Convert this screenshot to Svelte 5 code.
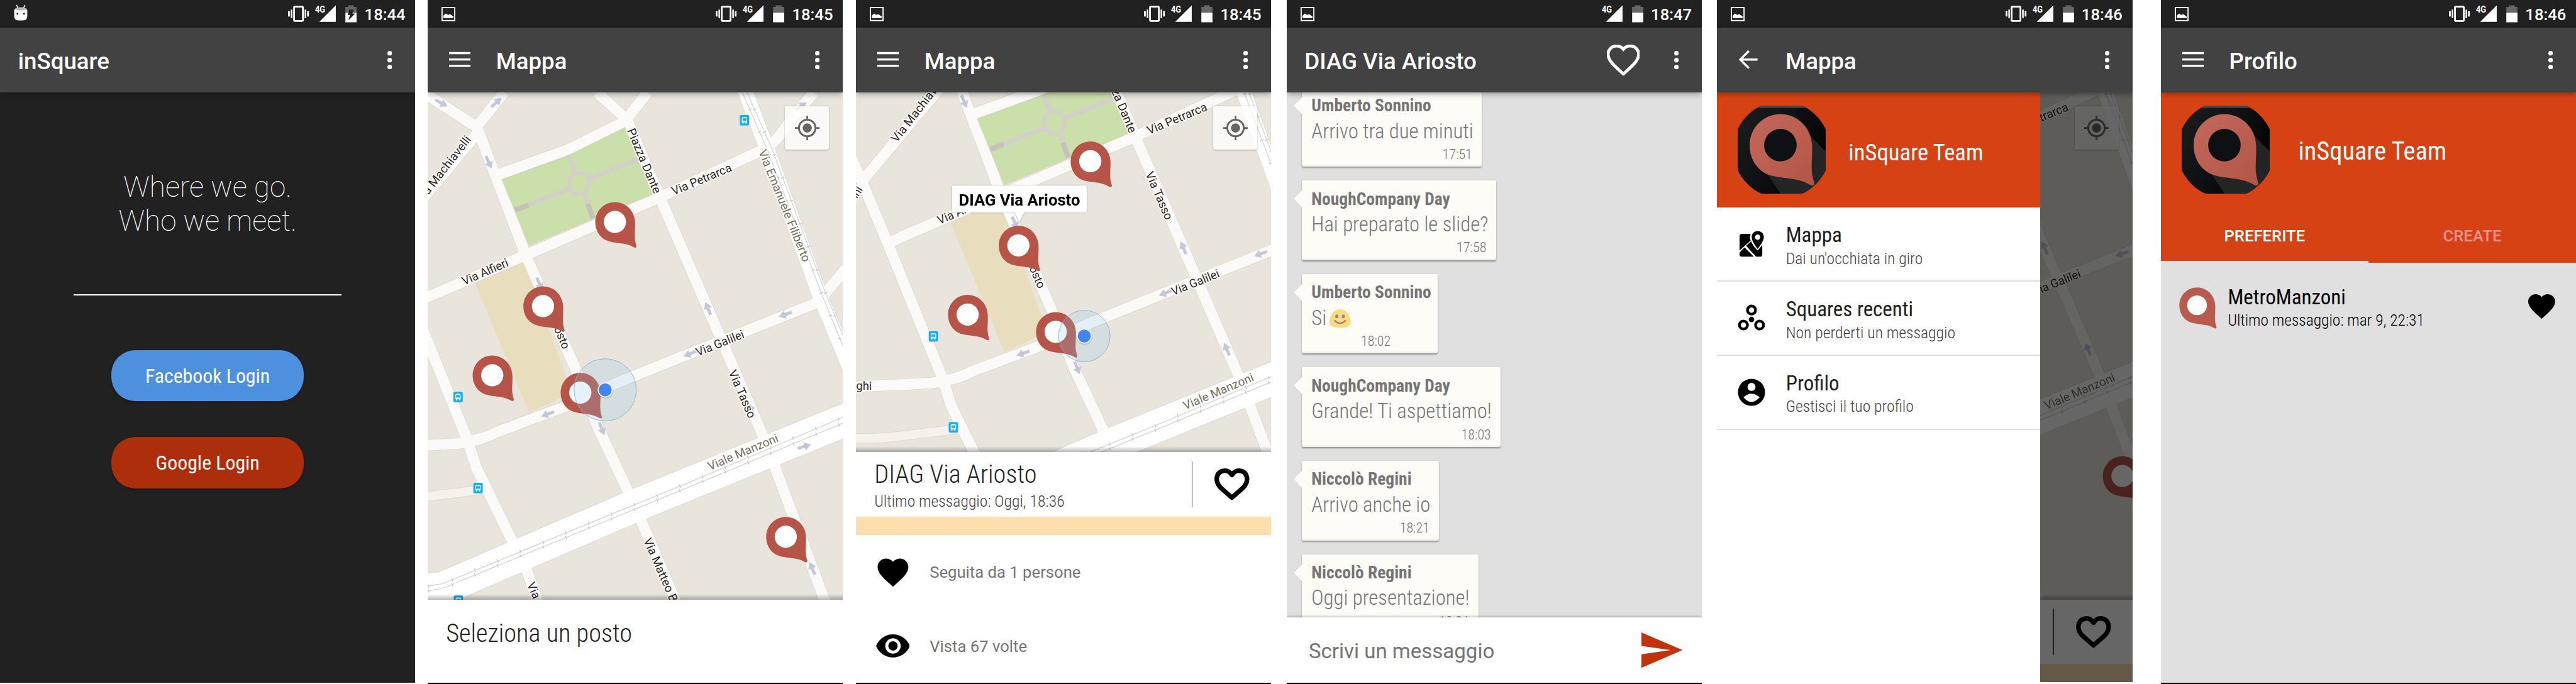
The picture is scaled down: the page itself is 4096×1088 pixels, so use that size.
<script>
  const PIN =
    'M0,-242C135,-242 240,-135 247,0C250,60 242,130 244,190C246,235 255,265 264,295C266,312 254,317 242,314C225,308 195,285 138,273C60,255 0,256 -60,240C-170,215 -240,120 -240,0C-240,-133 -133,-242 0,-242Z';
  const HEART =
    'M12 21.35l-1.45-1.32C5.4 15.36 2 12.28 2 8.5 2 5.42 4.42 3 7.5 3c1.74 0 3.41.81 4.5 2.09C13.09 3.81 14.76 3 16.5 3 19.58 3 22 5.42 22 8.5c0 3.78-3.4 6.86-8.55 11.54L12 21.35z';

  const messages = [
    { from: 'Umberto Sonnino', text: 'Arrivo tra due minuti', time: '17:51', w: 468 },
    { from: 'NoughCompany Day', text: 'Hai preparato le slide?', time: '17:58', w: 505 },
    { from: 'Umberto Sonnino', text: 'Si', emoji: true, time: '18:02', w: 353 },
    { from: 'NoughCompany Day', text: 'Grande! Ti aspettiamo!', time: '18:03', w: 517 },
    { from: 'Niccolò Regini', text: 'Arrivo anche io', time: '18:21', w: 357 },
    { from: 'Niccolò Regini', text: 'Oggi presentazione!', time: '18:24', w: 459 }
  ];

  const menu = [
    { icon: 'map', title: 'Mappa', sub: "Dai un'occhiata in giro" },
    { icon: 'squares', title: 'Squares recenti', sub: 'Non perderti un messaggio' },
    { icon: 'user', title: 'Profilo', sub: 'Gestisci il tuo profilo' }
  ];

  const roads = [
    'M-130,165L0,247L127,330L199,240',
    'M130,335L253,658L389,970L443,1112L522,1280L556,1356L643,1559L715,1720',
    'M130,345L-103,625',
    'M-140,555L-100,646L-36,800L101,1138L126,1215L220,1407L259,1487L285,1560L330,1660',
    'M-36,790L0,772L253,664L597,516L866,392Q900,378 937,323L1004,240',
    'M183,454L367,388L512,316L572,240',
    'M441,240L519,312L603,511L760,874L870,1129L901,1209L1032,1560L1095,1720',
    'M-140,1164L0,1158L75,1154Q144,1144 179,1124L377,1050L484,999L767,885L1015,786L1095,690'
  ];

  const arrows = [
    [36, 268, 28], [179, 266, -42], [159, 422, 66], [291, 738, 66], [312, 1077, 160],
    [453, 1115, 68], [682, 920, 158], [930, 818, 160], [729, 802, -113],
    [1000, 1478, -113], [980, 1161, -18], [971, 276, -35], [842, 1066, -113]
  ];

  const pins = [[487, 577], [300, 796], [168, 976], [397, 1021], [931.5, 1396]];
  const buses = [[824, 312], [79, 1032], [131, 1269], [80, 1562]];

  const commonLabels = [
    { t: 'Via Machiavelli', x: -16, y: 530, r: -52, l: 212 },
    { t: 'Via Petrarca', x: 640, y: 508, r: -22.8, l: 166 },
    { t: 'Via Galilei', x: 703, y: 927, r: -22, l: 132 },
    { t: 'Via Alfieri', x: 95, y: 742, r: -23.5, l: 128 },
    { t: 'Via Ariosto', x: 293, y: 772, r: 67, l: 150 },
    { t: 'Viale Manzoni', x: 734, y: 1224, r: -23, l: 196, soft: true }
  ];
  const homeLabels = [
    ...commonLabels,
    { t: 'Piazza Dante', x: 518, y: 339, r: 67, l: 181 },
    { t: 'Via Emanuele Filiberto', x: 860, y: 394, r: 68, l: 312, soft: true },
    { t: 'Via Tasso', x: 782, y: 968, r: 66.5, l: 133 },
    { t: 'Via Matteo B', x: 561, y: 1405, r: 66.5, l: 178 },
    { t: 'Via', x: 258, y: 1520, r: 66.5, l: 43 }
  ];
  const placeLabels = [
    ...commonLabels,
    { t: 'Piazza Dante', x: 518, y: 339, r: 67, l: 181 },
    { t: 'Via Tasso', x: 630, y: 610, r: 66.5, l: 133 },
    { t: 'nni', x: -124, y: 683, r: -58, l: 38 },
    { t: 'ghi', x: -122, y: 1172, r: 0, l: 41 }
  ];
</script>

{#snippet statusBar(time, vibrate, charging)}
  <div class="status">
    {#if charging}
      <svg class="note" viewBox="36 0 37 72">
        <path d="M43 13l4 8M65 13l-4 8" stroke="#fff" stroke-width="2.5" />
        <path d="M37 27Q38 20 54 20T71 27V42Q71 53 60 53H48Q37 53 37 42Z" fill="#fff" />
        <path d="M38 24Q42 19 54 19T70 24Q66 27 54 27T38 24Z" fill="#bbb" />
        <circle cx="45.500" cy="36" r="2.400" fill="#212121" /><circle cx="62.500" cy="36" r="2.400" fill="#212121" />
      </svg>
    {:else}
      <svg class="note" viewBox="36 0 37 72">
        <rect x="37.500" y="19.500" width="33" height="34" fill="none" stroke="#fff" stroke-width="3" />
        <path d="M41 47V41L47 35L53 39L58 37L67 43V47Z" fill="#fff" />
      </svg>
    {/if}
    <svg class="radios" viewBox="740 0 200 72">
      {#if vibrate}
        <rect x="765.500" y="17.500" width="23" height="37" rx="2" fill="none" stroke="#fff" stroke-width="4.500" />
        <path d="M750 29h4.500v14H750zM757 25h4v22h-4zM793 25h4v22h-4zM799.500 29h4.500v14h-4.500z" fill="#fff" />
      {/if}
      <text class="net" x="820" y="33.500" textLength="26.500" lengthAdjust="spacingAndGlyphs">4G</text>
      <path d="M831 57H874V14Z" fill="#fff" />
      <path d="M899 18h7v-4h15v4h7v15h-29z" fill="#666" />
      <path d="M899 33h29v25h-29z" fill="#fff" />
      {#if charging}
        <path d="M909 25h12l-4 10h7l-17 18 4-14h-6z" fill="#212121" />
      {/if}
    </svg>
    <span class="time">{time}</span>
  </div>
{/snippet}

{#snippet toolbar(title, nav, heart)}
  <header class="toolbar">
    {#if nav}
      <svg class="nav" viewBox="56 126 56 60">
        {#if nav === 'menu'}
          <path d="M56 135.500h56v5.500H56zM56 152h56v5.500H56zM56 168.500h56v5.500H56z" fill="#fff" />
        {:else}
          <path d="M106 155H61M83.500 132.500L61 155L83.500 177.500" fill="none" stroke="#fff" stroke-width="5.500" />
        {/if}
      </svg>
    {/if}
    <h1 class:indent={nav}>{title}</h1>
    {#if heart}
      <svg class="bar-heart" viewBox="1.2 2.2 21.600 20"><path d={HEART} fill="none" stroke="#fff" stroke-width="2" /></svg>
    {/if}
    <svg class="dots" viewBox="0 0 12 48">
      <circle cx="6" cy="6" r="6" /><circle cx="6" cy="24" r="6" /><circle cx="6" cy="42" r="6" />
    </svg>
  </header>
{/snippet}

{#snippet pin(x, y, k)}
  <g transform="translate({x} {y}) scale({k})">
    <path d={PIN} fill="#b75448" />
    <circle r="136" fill="#fff" />
  </g>
{/snippet}

{#snippet cityMap(box, labels, ux, uy, ur)}
  <svg class="map" viewBox={box} preserveAspectRatio="xMinYMin slice">
    <rect x="-200" y="0" width="1400" height="1900" fill="#e9e5dd" />
    <path d="M124,738L251,678L375,1022L264,1073Z" fill="#e8ddbc" />
    <path d="M-140,1297Q-60,1300 0,1291L150,1273" class="edge" stroke-width="26" />
    <path d="M-140,1297Q-60,1300 0,1291L150,1273" stroke="#f5f2ed" stroke-width="23" fill="none" />
    {#each roads as d}<path {d} class="edge" stroke-width="31" />{/each}
    <path d="M815,210L827,240L880,380L1020,769L1110,986" class="edge" stroke-width="42" />
    <path d="M-140,1585L0,1535L40,1530L537,1316L1100,1087" class="edge" stroke-width="88" />
    {#each roads as d}<path {d} class="road" />{/each}
    <path d="M815,210L827,240L880,380L1020,769L1110,986" stroke="#fff" stroke-width="39" fill="none" />
    <path d="M-140,1585L0,1535L40,1530L537,1316L1100,1087" stroke="#fff" stroke-width="85" fill="none" />
    <path
      d="M812,225L885,392L1025,765L1100,948M824,225L897,390L1036,765L1110,945M-60,1542L0,1525L40,1518L498,1329L675,1257L1100,1077M-60,1554L0,1537L40,1530L498,1341L675,1269L1100,1092"
      class="rail"
    />
    <path
      d="M812,225L885,392L1025,765L1100,948M824,225L897,390L1036,765L1110,945M-60,1542L0,1525L40,1518L498,1329L675,1257L1100,1077M-60,1554L0,1537L40,1530L498,1341L675,1269L1100,1092"
      class="ties"
    />
    <path d="M193,467L367,403L513,331L585,505L264,638Z" fill="#cbdfab" stroke="#c9cfb4" stroke-width="1" />
    <path d="M365,403L383,446M418,466L547,414M370,490L225,547M408,506L430,567" fill="none" stroke="#d3d1c7" stroke-width="13" />
    <path d="M383,449L404,449L419,462L421,483L406,503L383,505L369,490L368,465Z" fill="none" stroke="#d3d1c7" stroke-width="11" />
    <path d="M228,546L262,533M416,530L430,567" fill="none" stroke="#c6c1b7" stroke-width="13" />

    {#each arrows as [x, y, r]}
      <path transform="translate({x} {y}) rotate({r})" d="M-18,-4H0V-11L18,0L0,11V4H-18Z" fill="#c4c7d8" />
    {/each}
    {#each buses as [x, y]}
      <g transform="translate({x} {y})">
        <rect x="-12" y="-12" width="24" height="27" rx="3" fill="#8ebfd8" />
        <rect x="-12" y="-13" width="24" height="26" rx="3" fill="#0daefb" />
        <path d="M-7,6V-5Q-7,-8 0,-8T7,-5V6H5.500V9H2.500V6H-2.500V9H-5.500V6Z" fill="#fff" />
        <path d="M-5,-4.500H5V2H-5Z" fill="#0daefb" />
      </g>
    {/each}
    {#each labels as l}
      <text class="label" class:soft={l.soft} transform="translate({l.x} {l.y}) rotate({l.r})" textLength={l.l} lengthAdjust="spacingAndGlyphs">{l.t}</text>
    {/each}
    {#each pins as [x, y]}{@render pin(x, y, 0.2125)}{/each}
    {#if ur}
      <circle cx={ux} cy={uy} r={ur} fill="rgba(143,200,232,.22)" stroke="#81b1dc" stroke-width="1.500" />
      <circle cx={ux} cy={uy + 2} r="21" fill="rgba(0,0,0,.12)" />
      <circle cx={ux} cy={uy} r="19.500" fill="#fff" />
      <circle cx={ux} cy={uy} r="17" fill="#4285f4" />
    {/if}
  </svg>
{/snippet}

{#snippet locate()}
  <div class="locate">
    <svg viewBox="-32 -32 64 64">
      <circle r="21.500" fill="none" stroke="#666" stroke-width="5" />
      <circle r="12" fill="#666" />
      <path d="M0-32v10M0 22v10M-32 0h10M22 0h10" stroke="#666" stroke-width="4.500" />
    </svg>
  </div>
{/snippet}

{#snippet boldHeart()}
  <svg class="bold-heart" viewBox="0 0 91 83">
    <path d="M45.500 76L18 52Q6 41 6 27Q8 7 27 6Q38 6 45.500 17Q53 6 64 6Q83 7 85 27Q85 41 73 52Z" fill="none" stroke="#000" stroke-width="12" stroke-linejoin="round" />
  </svg>
{/snippet}

{#snippet logo(id)}
  <svg class="logo" viewBox="-333 -308 686 686">
    <defs>
      <clipPath {id}><circle cx="10" cy="35" r="378" /></clipPath>
      <linearGradient id="{id}-bg" x1="0" y1="0" x2="1" y2=".6">
        <stop offset="0" stop-color="#1c1f1d" /><stop offset=".45" stop-color="#101315" /><stop offset="1" stop-color="#020204" />
      </linearGradient>
      <linearGradient id="{id}-pin" x1="0" y1="0" x2="1" y2="1">
        <stop offset="0" stop-color="#c1695c" /><stop offset="1" stop-color="#b35546" />
      </linearGradient>
    </defs>
    <g clip-path="url(#{id})">
      <rect x="-333" y="-308" width="686" height="686" fill="url(#{id}-bg)" />
      <rect x="-333" y="-308" width="686" height="18" fill="#444648" />
      <path d="M238,-68L353,50V378H0L-98,228Z" fill="#222524" />
      <path d={PIN} fill="url(#{id}-pin)" />
      <circle r="127" fill="#0d1113" />
    </g>
  </svg>
{/snippet}

<main>
  <section class="screen dark">
    {@render statusBar('18:44', true, true)}
    {@render toolbar('inSquare', null, false)}
    <div class="login">
      <p class="tagline">Where we go.<br />Who we meet.</p>
      <hr />
      <button class="fb">Facebook Login</button>
      <button class="google">Google Login</button>
    </div>
  </section>

  <section class="screen tall second">
    {@render statusBar('18:45', true, false)}
    {@render toolbar('Mappa', 'menu', false)}
    <div class="map-area home">
      {@render cityMap('0 240 1080 1320', homeLabels, 461.7, 1014, 81)}
      {@render locate()}
    </div>
    <div class="pick">Seleziona un posto</div>
  </section>

  <section class="screen tall third">
    {@render statusBar('18:45', true, false)}
    {@render toolbar('Mappa', 'menu', false)}
    <div class="map-area place">
      {@render cityMap('-122.5 398 1080 936', placeLabels, 471.5, 1032, 67)}
      {@render locate()}
      <div class="callout">DIAG Via Ariosto</div>
    </div>
    <div class="place-head">
      <div class="place-text">
        <h2>DIAG Via Ariosto</h2>
        <p>Ultimo messaggio: Oggi, 18:36</p>
      </div>
      <i class="rule"></i>
      {@render boldHeart()}
    </div>
    <div class="band"></div>
    <ul class="facts">
      <li>
        <svg class="fact-icon" viewBox="0 0 88 80"><path transform="translate(-4 -8) scale(4)" d={HEART} /></svg>
        Seguita da 1 persone
      </li>
      <li>
        <svg class="fact-icon" viewBox="1 3 22 18"><path d="M12 4.500C7 4.500 2.730 7.610 1 12c1.730 4.390 6 7.500 11 7.500s9.270-3.110 11-7.500c-1.730-4.390-6-7.500-11-7.500zM12 17c-2.760 0-5-2.240-5-5s2.240-5 5-5 5 2.240 5 5-2.240 5-5 5zm0-8c-1.660 0-3 1.340-3 3s1.340 3 3 3 3-1.340 3-3-1.340-3-3-3z" /></svg>
        Vista 67 volte
      </li>
    </ul>
  </section>

  <section class="screen tall fourth">
    {@render statusBar('18:47', false, false)}
    {@render toolbar('DIAG Via Ariosto', null, true)}
    <div class="chat">
      {#each messages as m}
        <article class="bubble" style="width:{m.w / 100}rem">
          <svg class="tail" viewBox="0 0 26 50"><path d="M26 1L2 24.500L26 49Z" fill="#fdfcf7" /><path d="M26 1L2 24.500L26 49" fill="none" stroke="#cfcecb" stroke-width="1.500" /></svg>
          <b>{m.from}</b>
          <p>
            {m.text}{#if m.emoji}<svg class="emoji" viewBox="0 0 55 48">
                <path d="M27.500 0C46 0 55 18 55 36C55 44 42 48 27.500 48S0 44 0 36C0 18 9 0 27.500 0Z" fill="#fbdb80" />
                <ellipse cx="19" cy="18.500" rx="4" ry="5" fill="#8b8886" /><ellipse cx="36" cy="18.500" rx="4" ry="5" fill="#8b8886" />
                <path d="M14 29.500Q27.500 43 41 29.500" fill="none" stroke="#8b8886" stroke-width="4" stroke-linecap="round" />
              </svg>{/if}
          </p>
          <time class:inset={m.emoji}>{m.time}</time>
        </article>
      {/each}
    </div>
    <div class="compose">
      <span>Scrivi un messaggio</span>
      <svg class="send" viewBox="0 0 107 92"><path d="M0 0L107 46L0 92V57L76 46L0 35Z" fill="#c1330b" /></svg>
    </div>
  </section>

  <section class="screen fifth">
    {@render statusBar('18:46', true, false)}
    {@render toolbar('Mappa', 'back', false)}
    <div class="split">
      <nav class="drawer">
        <div class="owner">
          {@render logo('drawer-logo')}
          <span>inSquare Team</span>
        </div>
        {#each menu as item}
          <div class="item">
            <svg class="item-icon" viewBox="0 0 72 72">
              {#if item.icon === 'map'}
                <path d="M11 10H34Q30 20 34 27L5 53V16Q5 10 11 10ZM5 58L18 45L42 69H11Q5 69 5 64ZM22 41L35 29Q41 43 52 53L64 39V64Q64 69 59 69H48Z" />
                <path fill-rule="evenodd" d="M52 2.500C61 2.500 68 9 68 18C68 29 57 42 52 49C47 42 36.500 29 36.500 18C36.500 9 43 2.500 52 2.500ZM52 11.500A7 7 0 1 0 52 25.500A7 7 0 1 0 52 11.500Z" />
              {:else if item.icon === 'squares'}
                <g fill="none" stroke="#000" stroke-width="7">
                  <circle cx="36" cy="15" r="10.500" /><circle cx="15" cy="54" r="10.500" /><circle cx="57" cy="54" r="10.500" />
                </g>
                <circle cx="36" cy="39.500" r="7" />
              {:else}
                <circle cx="36" cy="36" r="35.200" />
                <circle cx="36" cy="22" r="10.500" fill="#fff" />
                <path d="M15 49Q36 30 57 49Q36 73 15 49Z" fill="#fff" />
              {/if}
            </svg>
            <div>
              <h3>{item.title}</h3>
              <p>{item.sub}</p>
            </div>
          </div>
        {/each}
      </nav>
      <div class="dimmed">
        <div class="map-area home">
          {@render cityMap('717.5 398 240 1320', placeLabels, 0, 0, 0)}
          {@render locate()}
        </div>
        <div class="place-head">
          <i class="rule"></i>
          {@render boldHeart()}
        </div>
        <div class="band"></div>
      </div>
    </div>
  </section>

  <section class="screen tall sixth">
    {@render statusBar('18:46', true, false)}
    {@render toolbar('Profilo', 'menu', false)}
    <div class="profile">
      <div class="owner big">
        {@render logo('profile-logo')}
        <span>inSquare Team</span>
      </div>
      <div class="tabs">
        <span class="active">PREFERITE</span>
        <span>CREATE</span>
      </div>
    </div>
    <div class="fav">
      <svg class="fav-pin" viewBox="-242 -244 510 564"><path d={PIN} fill="#b95a4e" /><circle r="134" fill="#fff" /></svg>
      <div>
        <h3>MetroManzoni</h3>
        <p>Ultimo messaggio: mar 9, 22:31</p>
      </div>
      <svg class="fav-heart" viewBox="2 3 20 18.350" preserveAspectRatio="none"><path d={HEART} /></svg>
    </div>
  </section>
</main>

<style>
  /* 1rem equals 100 device pixels of a 1080-pixel-wide phone */
  :global(html) { font-size: 61.1343px; }
  :global(body) { background: #fff; overflow: hidden; }
  main {
    display: flex;
    align-items: flex-start;
    width: 67rem;
    height: 17.8rem;
    overflow: hidden;
    font-family: Roboto, sans-serif;
    color: #212121;
  }
  svg { display: block; flex: none; }
  h1, h2, h3, p, ul { margin: 0; padding: 0; font-weight: 400; }

  .screen {
    display: flex;
    flex-direction: column;
    flex: none;
    box-sizing: border-box;
    width: 10.8rem;
    height: 17.76rem;
    background: #fff;
    overflow: hidden;
  }
  .tall { height: 17.8rem; border-bottom: .04rem solid #000; }
  .dark { background: #212121; }
  .second { margin-left: .32rem; }
  .third { margin-left: .34rem; }
  .fourth { margin-left: .4rem; background: #e0e0e0; }
  .fifth { margin-left: .4rem; height: 17.74rem; }
  .sixth { margin-left: .74rem; background: #e0e0e0; }

  .status {
    display: flex;
    flex: none;
    height: .72rem;
    background: #212121;
    color: #fff;
  }
  .note { width: .37rem; height: .72rem; margin-left: .36rem; }
  .radios { width: 2rem; height: .72rem; margin-left: auto; }
  .net { font: 700 23px Roboto, sans-serif; fill: #fff; }
  .time {
    width: 1.34rem;
    margin-left: .06rem;
    line-height: .77rem;
    font-size: .42rem;
    font-weight: 500;
    white-space: nowrap;
    text-indent: .02rem;
  }

  .toolbar {
    display: flex;
    flex: none;
    align-items: center;
    position: relative;
    z-index: 2;
    height: 1.68rem;
    background: #424242;
    color: #fff;
    box-shadow: 0 .03rem .14rem rgba(0, 0, 0, .4);
  }
  .nav { width: .56rem; height: .6rem; margin: 0 0 .01rem .56rem; }
  h1 {
    flex: 1;
    padding-top: .08rem;
    margin-left: .47rem;
    font-size: .6rem;
    font-weight: 500;
    white-space: nowrap;
  }
  h1.indent { margin-left: .66rem; }
  .dots { width: .12rem; height: .48rem; margin-right: .6rem; fill: #fff; }
  .bar-heart { width: .86rem; height: .8rem; margin-right: .89rem; }

  .login {
    display: flex;
    flex-direction: column;
    align-items: center;
  }
  .tagline {
    margin-top: 2.04rem;
    font-size: .75rem;
    font-weight: 100;
    line-height: .88rem;
    color: #fff;
    text-align: center;
  }
  hr { width: 6.96rem; height: .034rem; margin: 1.45rem 0 1.42rem; border: 0; background: #fff; }
  button {
    box-sizing: border-box;
    width: 5rem;
    height: 1.34rem;
    padding: .06rem 0 0;
    border: 0;
    border-radius: .62rem;
    color: #fff;
    font: 400 .52rem/1.28rem "Roboto Condensed", Roboto, sans-serif;
    font-stretch: 75%;
    box-shadow: 0 .02rem .06rem rgba(0, 0, 0, .4);
  }
  .fb { background: #4d90de; }
  .google { margin-top: .92rem; background: #ad2e0b; }

  .map-area { position: relative; flex: none; overflow: hidden; }
  .map-area::after {
    content: "";
    position: absolute;
    inset: auto 0 0;
    height: .15rem;
    background: linear-gradient(transparent, rgba(0, 0, 0, .28));
  }
  .map { width: 100%; height: 100%; }
  .home { height: 13.2rem; }
  .place { height: 9.36rem; }
  .edge { fill: none; stroke: #dcd7cd; }
  .road { fill: none; stroke: #fbfaf8; stroke-width: 28; }
  .rail { fill: none; stroke: #d8d8d8; stroke-width: 2.5; }
  .ties { fill: none; stroke: #c4c4c4; stroke-width: 9; stroke-dasharray: 2 62; }
  .label {
    font: 400 31px Roboto, sans-serif;
    fill: #33291f;
    stroke: rgba(255, 255, 255, .85);
    stroke-width: 6;
    stroke-linejoin: round;
    paint-order: stroke;
  }
  .soft { fill: #74725c; }

  .locate {
    display: grid;
    place-items: center;
    position: absolute;
    top: .36rem;
    right: .36rem;
    width: 1.14rem;
    height: 1.14rem;
    border-radius: .04rem;
    background: rgba(255, 255, 255, .75);
    box-shadow: 0 .01rem .04rem rgba(0, 0, 0, .3);
  }
  .locate svg { width: .64rem; height: .64rem; }

  .callout {
    position: absolute;
    left: 2.5rem;
    top: 2.42rem;
    width: 3.51rem;
    height: .71rem;
    background: #fff;
    color: #000;
    font-size: .42rem;
    font-weight: 700;
    line-height: .76rem;
    text-align: center;
    white-space: nowrap;
    filter: drop-shadow(0 .01rem .02rem rgba(0, 0, 0, .35));
  }
  .callout::after {
    content: "";
    position: absolute;
    left: 1.62rem;
    top: .7rem;
    border: .14rem solid transparent;
    border-top: .27rem solid #fff;
    border-bottom: 0;
  }

  .pick, h2, h3, .place-head p, .drawer p, .fav p, .owner span, .bubble {
    font-family: "Roboto Condensed", Roboto, sans-serif;
    font-stretch: 75%;
    white-space: nowrap;
  }
  .pick {
    padding: .49rem .48rem;
    font-size: .66rem;
    font-weight: 300;
    line-height: .8rem;
  }

  .place-head {
    display: flex;
    flex: none;
    box-sizing: border-box;
    height: 1.68rem;
    padding: .24rem .56rem 0 .48rem;
    background: #fff;
  }
  .place-text { margin-top: -.04rem; }
  h2 { font-size: .66rem; font-weight: 300; line-height: .8rem; }
  .place-head p { margin-top: .03rem; font-size: .42rem; font-weight: 300; line-height: .5rem; color: #444; }
  .rule { flex: none; width: .03rem; height: 1.2rem; margin-left: auto; background: #444; }
  .bold-heart { width: .91rem; height: .83rem; margin: .19rem 0 0 .57rem; }
  .band { flex: none; height: .48rem; background: #ffdeae; }
  .facts { list-style: none; }
  .facts li {
    display: flex;
    align-items: center;
    height: 1.93rem;
    font-size: .42rem;
    color: #757575;
  }
  .fact-icon { width: .88rem; height: .8rem; margin: 0 .52rem 0 .52rem; fill: #000; }

  .chat {
    display: flex;
    flex: 1;
    flex-direction: column;
    align-items: flex-start;
    gap: .36rem;
    min-height: 0;
    padding-left: .4rem;
    overflow: hidden;
  }
  .bubble {
    position: relative;
    flex: none;
    box-sizing: border-box;
    height: 2.07rem;
    padding: .2rem .25rem 0;
    border-radius: .04rem;
    background: #fdfcf7;
    box-shadow: 0 .02rem .04rem rgba(0, 0, 0, .35), inset 0 -.04rem .02rem rgba(0, 0, 0, .06);
    color: #757575;
  }
  .bubble:first-child { margin-top: -.13rem; }
  .tail { position: absolute; left: -.25rem; top: .23rem; width: .26rem; height: .5rem; }
  .bubble b { display: block; font-size: .45rem; font-weight: 700; line-height: .54rem; }
  .bubble p {
    display: flex;
    align-items: center;
    margin-top: .09rem;
    font-size: .536rem;
    font-weight: 300;
    line-height: .64rem;
  }
  .emoji { width: .55rem; height: .48rem; margin: .03rem 0 0 .08rem; }
  time { display: block; margin-top: .07rem; font-size: .36rem; font-weight: 300; line-height: .42rem; text-align: right; }
  time.inset { margin-right: .97rem; }
  .compose {
    display: flex;
    flex: none;
    align-items: center;
    position: relative;
    justify-content: space-between;
    height: 1.7rem;
    padding: 0 .49rem 0 .58rem;
    background: #fff;
    box-shadow: 0 -.02rem .08rem rgba(0, 0, 0, .35);
    font-size: .54rem;
    color: #757575;
  }
  .compose span { padding-top: .04rem; }
  .send { width: 1.07rem; height: .92rem; }

  .split { display: flex; flex: 1; min-height: 0; }
  .drawer { flex: none; width: 8.4rem; background: #fff; }
  .dimmed { flex: 1; min-width: 0; overflow: hidden; filter: brightness(.4); }
  .dimmed .place-head { padding-left: 0; }
  .owner {
    display: flex;
    align-items: center;
    height: 3rem;
    background: #d64214;
    color: #fff;
    font-size: .6rem;
  }
  .owner span { margin: .13rem 0 0 .59rem; }
  .logo { width: 2.29rem; height: 2.29rem; margin-left: .54rem; }
  .item {
    display: flex;
    box-sizing: border-box;
    height: 1.93rem;
    padding-left: .54rem;
    border-bottom: .034rem solid #dfdfdf;
  }
  .item-icon { width: .72rem; height: .72rem; margin: .58rem .53rem 0 0; }
  .item h3 { margin-top: .38rem; font-size: .54rem; line-height: .68rem; }
  .item p { margin-top: .01rem; font-size: .42rem; font-weight: 300; line-height: .5rem; color: #444; }

  .profile { flex: none; height: 4.445rem; background: #d64214; }
  .owner.big { font-size: .66rem; }
  .owner.big span { margin: .07rem 0 0 .75rem; }
  .tabs { display: flex; height: 1.445rem; }
  .tabs span {
    flex: 1;
    box-sizing: border-box;
    padding-top: .49rem;
    font-size: .42rem;
    font-weight: 500;
    line-height: .5rem;
    text-align: center;
    color: #f0938c;
  }
  .tabs .active { color: #fff; border-bottom: .06rem solid #e0e0e0; }
  .fav { display: flex; color: #000; padding: .63rem .54rem 0 .475rem; }
  .fav-pin { width: .98rem; height: 1.08rem; margin-right: .29rem; }
  .fav h3 { margin-top: -.07rem; font-size: .54rem; line-height: .64rem; }
  .fav p { font-size: .417rem; font-weight: 300; line-height: .52rem; margin-top: .04rem; }
  .fav-heart { width: .7rem; height: .64rem; margin: .18rem 0 0 auto; }
</style>
